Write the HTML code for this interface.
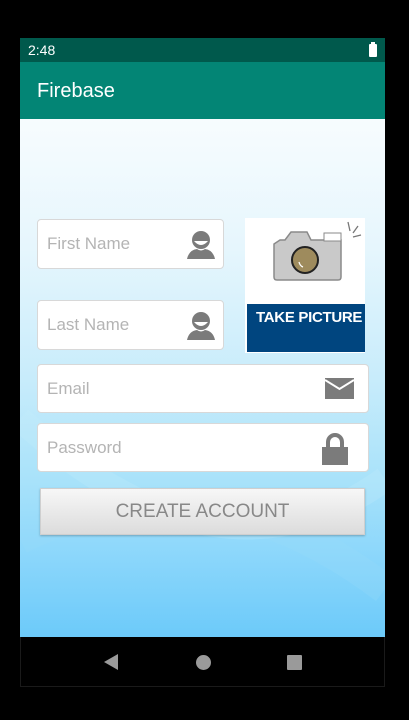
<!DOCTYPE html>
<html><head><meta charset="utf-8"><style>
*{margin:0;padding:0;box-sizing:border-box}
body{width:409px;height:720px;background:#000;position:relative;overflow:hidden;font-family:"Liberation Sans",sans-serif}
.abs{position:absolute}
#status{left:20px;top:38px;width:365px;height:24px;background:#00594c;color:#fff;font-size:14px}
#bar{left:20px;top:62px;width:365px;height:57px;background:#038575;color:#fff;font-size:20px}
#content{left:20px;top:119px;width:365px;height:518px;overflow:hidden;
background:linear-gradient(180deg,#f7fcfe 0%,#e6f6fd 25%,#c8ecfb 50%,#a8e2fa 70%,#8ad6fb 85%,#6ccaf9 100%)}
.field{position:absolute;background:#fff;border:1px solid #d8d8d8;border-radius:4px}
.ph{position:absolute;left:9px;color:#b4b4b4;font-size:17px}
#nav{left:20px;top:637px;width:365px;height:50px;background:#000;border:1px solid #1a1a1a;border-top:none}
</style></head><body>
<div id="status" class="abs"><span class="abs" style="left:8px;top:4px">2:48</span>
<div class="abs" style="left:349px;top:6px;width:8px;height:13px;background:#fff;border-radius:1px"></div><div class="abs" style="left:351px;top:4px;width:4px;height:2px;background:#fff"></div></div>
<div id="bar" class="abs"><span class="abs" style="left:17px;top:18px">Firebase</span></div>
<div id="content" class="abs">
<svg class="abs" style="left:0;top:0" width="365" height="518" opacity="0.25"><path d="M0 420 Q180 330 365 470" stroke="#9adcf8" stroke-width="30" fill="none"/><path d="M0 300 Q200 480 365 360" stroke="#c6eefb" stroke-width="25" fill="none"/></svg>
<div class="field" style="left:17px;top:100px;width:187px;height:50px"><span class="ph" style="top:14px">First Name</span>
<svg class="abs" style="left:147px;top:9px" width="32" height="32"><circle cx="16" cy="11" r="9" fill="#7b7b7b"/><path d="M9 12 Q16 20 23 12" fill="#fff"/><path d="M2 30 Q4 21 12 20 Q16 23 20 20 Q28 21 30 30Z" fill="#7b7b7b"/></svg></div>
<div class="field" style="left:17px;top:181px;width:187px;height:50px"><span class="ph" style="top:14px">Last Name</span>
<svg class="abs" style="left:147px;top:9px" width="32" height="32"><circle cx="16" cy="11" r="9" fill="#7b7b7b"/><path d="M9 12 Q16 20 23 12" fill="#fff"/><path d="M2 30 Q4 21 12 20 Q16 23 20 20 Q28 21 30 30Z" fill="#7b7b7b"/></svg></div>
<div class="abs" style="left:225px;top:99px;width:120px;height:135px;background:#fff">
<svg class="abs" style="left:0;top:0" width="120" height="86"><path d="M29 26 L35 22 L40 22 L46 14 L62 14 L66 22 L96 22 L96 59 Q96 62 93 62 L32 62 Q29 62 29 59Z" fill="#c9c9c9" stroke="#8a8a8a" stroke-width="1.5"/><rect x="79" y="15" width="17" height="8" fill="#fff" stroke="#8a8a8a"/><path d="M103 4 L105 13 M108 15 L113 8 M108 19 L116 17" stroke="#777" stroke-width="1.3"/><circle cx="60" cy="42" r="13" fill="#9e8b5d" stroke="#222" stroke-width="2"/><path d="M54 44 Q55 48 58 49" stroke="#fff" stroke-width="1.3" fill="none"/></svg>
<div class="abs" style="left:2px;top:86px;width:118px;height:48px;background:#00457f;color:#fff;font-weight:bold;font-size:15px;padding:5px 0 0 9px;letter-spacing:-0.3px">TAKE PICTURE</div></div>
<div class="field" style="left:17px;top:245px;width:332px;height:49px"><span class="ph" style="top:14px">Email</span>
<svg class="abs" style="left:287px;top:13px" width="30" height="22"><rect x="0" y="0" width="29" height="21" fill="#7b7b7b"/><path d="M0 2 L14.5 11 L29 2" stroke="#fff" stroke-width="2" fill="none"/></svg></div>
<div class="field" style="left:17px;top:304px;width:332px;height:49px"><span class="ph" style="top:14px">Password</span>
<svg class="abs" style="left:282px;top:8px" width="30" height="34"><path d="M8 15 V10 A7 7 0 0 1 22 10 V15" stroke="#7b7b7b" stroke-width="4" fill="none"/><rect x="2" y="15" width="26" height="18" fill="#7b7b7b"/></svg></div>
<div class="abs" style="left:20px;top:369px;width:325px;height:47px;background:linear-gradient(#f7f7f7,#dcdcdc);border:1px solid #cfcfcf;box-shadow:0 1px 2px rgba(0,0,0,.25);color:#888;font-size:19px;text-align:center;line-height:45px">CREATE ACCOUNT</div>
</div>
<div id="nav" class="abs">
<svg class="abs" style="left:82px;top:16px" width="16" height="18"><path d="M15 1 L1 9 L15 17Z" fill="#9a9a9a"/></svg>
<div class="abs" style="left:175px;top:18px;width:15px;height:15px;border-radius:50%;background:#9a9a9a"></div>
<div class="abs" style="left:266px;top:18px;width:15px;height:15px;background:#9a9a9a;border-radius:1px"></div>
</div>
</body></html>
